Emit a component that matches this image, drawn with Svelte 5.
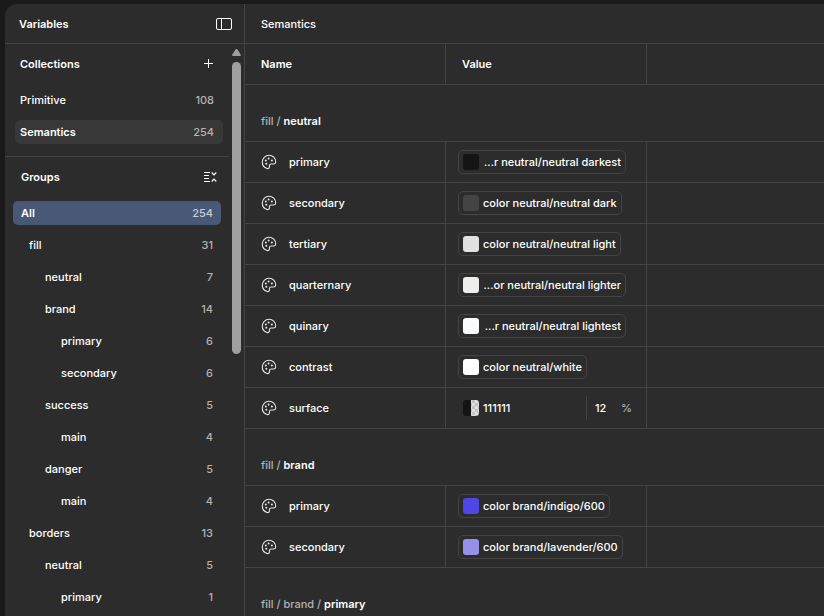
<script lang="ts">
    type Variable = {
        name: string;
        color: string;
        alias?: string;
        clipped?: boolean;
        hex?: string;
        opacity?: number;
    };

    const INDENT = 16; // px per tree level

    const collections = [
        { name: "Primitive", count: 108 },
        { name: "Semantics", count: 254 },
    ];

    const groups = [
        { name: "All", count: 254, depth: 0 },
        { name: "fill", count: 31, depth: 0.5 },
        { name: "neutral", count: 7, depth: 1.5 },
        { name: "brand", count: 14, depth: 1.5 },
        { name: "primary", count: 6, depth: 2.5 },
        { name: "secondary", count: 6, depth: 2.5 },
        { name: "success", count: 5, depth: 1.5 },
        { name: "main", count: 4, depth: 2.5 },
        { name: "danger", count: 5, depth: 1.5 },
        { name: "main", count: 4, depth: 2.5 },
        { name: "borders", count: 13, depth: 0.5 },
        { name: "neutral", count: 5, depth: 1.5 },
        { name: "primary", count: 1, depth: 2.5 },
    ];

    const sections: { path: string; title: string; rows: Variable[] }[] = [
        {
            path: "fill / ",
            title: "neutral",
            rows: [
                { name: "primary", color: "#141414", alias: "...r neutral/neutral darkest", clipped: true },
                { name: "secondary", color: "#444444", alias: "color neutral/neutral dark" },
                { name: "tertiary", color: "#e1e1e1", alias: "color neutral/neutral light" },
                { name: "quarternary", color: "#eeeeec", alias: "...or neutral/neutral lighter", clipped: true },
                { name: "quinary", color: "#f7fbfc", alias: "...r neutral/neutral lightest", clipped: true },
                { name: "contrast", color: "#ffffff", alias: "color neutral/white" },
                { name: "surface", color: "#141414", hex: "111111", opacity: 12 },
            ],
        },
        {
            path: "fill / ",
            title: "brand",
            rows: [
                { name: "primary", color: "#4f46e5", alias: "color brand/indigo/600" },
                { name: "secondary", color: "#9790e8", alias: "color brand/lavender/600" },
            ],
        },
        { path: "fill / brand / ", title: "primary", rows: [] },
    ];

    let activeCollection = $state("Semantics");
    let activeGroup = $state(0);
</script>

<div class="window">
    <aside class="sidebar">
        <header class="bar">
            <h1>Variables</h1>
            <button class="icon-button" aria-label="Toggle sidebar">
                <svg width="16" height="12" viewBox="0 0 16 12" fill="none" stroke="currentColor">
                    <rect x="0.5" y="0.5" width="15" height="11" rx="1.5" />
                    <path d="M5.5 0.5v11" />
                </svg>
            </button>
        </header>

        <div class="scroller">
            <div class="scroll-content">
                <section class="collections">
                    <div class="section-head">
                        <h2>Collections</h2>
                        <button class="icon-button" aria-label="Create collection">
                            <svg width="9" height="10" viewBox="0 0 9 10" stroke="currentColor">
                                <path d="M4.5 0v9M0 4.5h9" />
                            </svg>
                        </button>
                    </div>
                    {#each collections as item}
                        <button
                            class="item"
                            class:active={activeCollection === item.name}
                            onclick={() => (activeCollection = item.name)}
                        >
                            <span>{item.name}</span>
                            <span class="count">{item.count}</span>
                        </button>
                    {/each}
                </section>

                <section class="groups">
                    <div class="section-head">
                        <h2>Groups</h2>
                        <button class="icon-button" aria-label="Collapse all groups">
                            <svg width="13" height="12" viewBox="0 0 13 12" fill="none" stroke="currentColor">
                                <path d="M0 1.5h6M0 4.5h5M0 7.5h5M0 10.5h6" />
                                <path stroke-width="1.2" d="M7.7 1.5L10 3.8l2.3-2.3M7.7 10.5L10 8.2l2.3 2.3" />
                            </svg>
                        </button>
                    </div>
                    {#each groups as item, i}
                        <button
                            class="item"
                            class:active={activeGroup === i}
                            onclick={() => (activeGroup = i)}
                        >
                            <span style="padding-left: {item.depth * INDENT}px">{item.name}</span>
                            <span class="count">{item.count}</span>
                        </button>
                    {/each}
                </section>
            </div>

            <div class="scrollbar" aria-hidden="true">
                <svg width="9" height="7" viewBox="0 0 9 7" fill="currentColor">
                    <path d="M4.5 0Q5.3 0 5.8 0.9L8.7 5.4Q9.3 7 8 7H1Q-0.3 7 0.3 5.4L3.2 0.9Q3.7 0 4.5 0z" />
                </svg>
                <div class="thumb"></div>
            </div>
        </div>
    </aside>

    <main>
        <header class="bar">
            <span>Semantics</span>
        </header>

        <table>
            <colgroup>
                <col class="col-name" />
                <col class="col-value" />
                <col />
            </colgroup>
            <thead>
                <tr>
                    <th scope="col">Name</th>
                    <th scope="col">Value</th>
                    <td></td>
                </tr>
            </thead>
            {#each sections as section}
                <tbody>
                    <tr>
                        <th class="group-title" colspan="3" scope="rowgroup">
                            <span class="path">{section.path}</span>{section.title}
                        </th>
                    </tr>
                    {#each section.rows as row}
                        <tr>
                            <td>
                                <div class="name">
                                    <svg width="16" height="16" viewBox="0 0 16 16" fill="none" stroke="currentColor" stroke-width="1.1">
                                        <path d="M8 1.3C4.2 1.3 1.3 4.3 1.3 8c0 3 2 5.7 4.8 6.5 1.3.4 2.3-.4 2.3-1.6v-1.1c0-1 .8-1.8 1.8-1.8h2.6c1.1 0 1.9-.8 1.9-1.9C14.7 4.2 11.8 1.3 8 1.3z" />
                                        <g fill="currentColor" stroke="none">
                                            <circle cx="7.6" cy="4.6" r="1" />
                                            <circle cx="10.9" cy="6.5" r="1" />
                                            <circle cx="4.8" cy="6.6" r="1" />
                                            <circle cx="5.3" cy="9.7" r="1" />
                                        </g>
                                    </svg>
                                    <span>{row.name}</span>
                                </div>
                            </td>
                            <td class="value-cell">
                                {#if row.alias}
                                    <button class="chip" class:clipped={row.clipped}>
                                        <span class="swatch" style="background-color: {row.color}"></span>
                                        <span>{row.alias}</span>
                                    </button>
                                {:else}
                                    <div class="raw">
                                        <span class="swatch translucent" style="--color: {row.color}"></span>
                                        <input class="hex" aria-label="{row.name} hex" value={row.hex} />
                                        <label class="opacity">
                                            <input aria-label="{row.name} opacity" value={row.opacity} />
                                            <span>%</span>
                                        </label>
                                    </div>
                                {/if}
                            </td>
                            <td></td>
                        </tr>
                    {/each}
                </tbody>
            {/each}
        </table>
    </main>
</div>

<style>
    :global(body) {
        background: #1a1a1a;
    }

    .window {
        --line: #444;
        --muted: #b3b3b3;
        box-sizing: border-box;
        display: flex;
        height: calc(100vh - 4px);
        margin: 4px 0 0 5px;
        overflow: hidden;
        border-radius: 12px 0 0 0;
        background: #2c2c2c;
        color: #fff;
        font: 500 11px/16px Inter, sans-serif;
    }

    h1,
    h2 {
        margin: 0;
        font-size: 11px;
        font-weight: 600;
    }

    button,
    input {
        padding: 0;
        border: 0;
        background: none;
        color: inherit;
        font: inherit;
    }

    svg {
        display: block;
        flex-shrink: 0;
    }

    .sidebar {
        display: flex;
        flex-direction: column;
        flex: 0 0 239px;
        border-right: 1px solid var(--line);
    }

    .bar {
        box-sizing: border-box;
        display: flex;
        flex-shrink: 0;
        align-items: center;
        justify-content: space-between;
        height: 40px;
        border-bottom: 1px solid var(--line);
    }

    .sidebar .bar {
        padding: 0 12px 0 14px;
    }

    main .bar {
        padding: 0 16px;
    }

    .scroller {
        display: flex;
        flex: 1;
        min-height: 0;
    }

    .scroll-content {
        flex: 1;
        overflow: hidden;
    }

    .section-head {
        display: flex;
        align-items: center;
        justify-content: space-between;
        height: 40px;
    }

    .collections {
        padding-bottom: 4px;
        border-bottom: 1px solid var(--line);
    }

    .collections .section-head {
        padding: 0 16px 0 15px;
    }

    .groups .section-head {
        padding: 0 12px 0 16px;
    }

    .item {
        box-sizing: border-box;
        display: flex;
        align-items: center;
        justify-content: space-between;
        width: calc(100% - 16px);
        height: 24px;
        margin: 4px 6px 8px 10px;
        padding: 0 9px 0 5px;
        border-radius: 5px;
    }

    .groups .item {
        margin: 4px 8px 8px;
        padding: 0 8px;
    }

    .count {
        color: var(--muted);
    }

    .item.active {
        background: #383838;
        font-weight: 600;
    }

    .item.active .count {
        font-weight: 500;
    }

    .groups .item.active {
        background: #4a5878;
    }

    .groups .item.active .count {
        color: #c8cdd6;
    }

    .scrollbar {
        display: flex;
        flex-direction: column;
        align-items: center;
        gap: 6px;
        flex: 0 0 15px;
        color: #9f9f9f;
    }

    .scrollbar svg {
        margin-top: 5px;
    }

    .thumb {
        flex: 0 0 51%;
        width: 9px;
        border-radius: 5px;
        background: currentColor;
    }

    main {
        flex: 1;
        min-width: 0;
    }

    table {
        width: 100%;
        table-layout: fixed;
        border-collapse: separate;
        border-spacing: 0;
    }

    .col-name,
    .col-value {
        width: 201px;
    }

    th,
    td {
        box-sizing: border-box;
        height: 41px;
        padding: 0 16px;
        border-right: 1px solid var(--line);
        border-bottom: 1px solid var(--line);
        text-align: left;
        font-weight: 600;
    }

    td {
        font-weight: 500;
    }

    th:last-child,
    td:last-child {
        border-right: 0;
    }

    .group-title {
        height: 57px;
        padding-top: 16px;
    }

    .path {
        color: var(--muted);
        font-weight: 500;
        white-space: pre;
    }

    .name {
        display: flex;
        align-items: center;
        gap: 12px;
    }

    .name svg {
        color: #e6e6e6;
    }

    .value-cell {
        padding: 0 12px;
    }

    .chip {
        box-sizing: border-box;
        display: flex;
        align-items: center;
        gap: 4px;
        height: 24px;
        padding: 0 4px;
        border: 1px solid var(--line);
        border-radius: 5px;
        white-space: nowrap;
    }

    .clipped {
        justify-content: space-between;
        width: 168px;
    }

    .swatch {
        flex: 0 0 16px;
        height: 16px;
        border-radius: 3px;
    }

    /* Left half solid, right half over a checkerboard */
    .translucent {
        background:
            linear-gradient(to right, var(--color) 50%, transparent 50%),
            repeating-conic-gradient(#c4c4c4 0 25%, #e0e0e0 0 50%) 0 0 / 6px 6px;
    }

    .raw {
        display: flex;
        align-items: center;
        height: 24px;
        padding-left: 5px;
    }

    .hex {
        flex: 1;
        min-width: 0;
        margin-left: 4px;
    }

    .opacity {
        display: flex;
        align-items: center;
        justify-content: space-between;
        width: 39px;
        height: 24px;
        padding-left: 8px;
        border-left: 1px solid var(--line);
    }

    .opacity input {
        width: 20px;
    }

    .opacity span {
        padding-right: 2px;
        color: var(--muted);
    }
</style>
